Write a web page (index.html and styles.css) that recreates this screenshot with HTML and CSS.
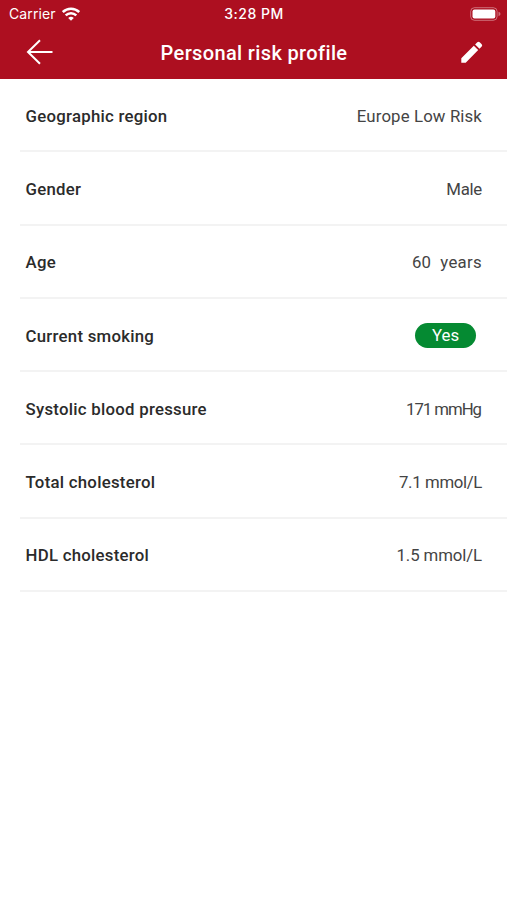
FILE: index.html
```html
<!DOCTYPE html>
<html lang="en">
<head>
<meta charset="utf-8">
<meta name="viewport" content="width=device-width, initial-scale=1">
<title>Personal risk profile</title>
<link rel="stylesheet" href="styles.css">
</head>
<body>
<header class="header">
  <div class="status">
    <div class="carrier"><span>Carrier</span>
      <svg class="wifi" viewBox="0 0 18 14" width="18" height="14" fill="none" stroke="#fff" stroke-width="2.5"><path d="M.8 5a11.8 11.8 0 0 1 16.4 0M3.7 8.3a7.6 7.6 0 0 1 10.6 0"/><path d="M9 13.8 6.2 11a4 4 0 0 1 5.6 0Z" fill="#fff" stroke="none"/></svg>
    </div>
    <span class="time">3:28 PM</span>
    <svg class="battery" viewBox="0 0 31 14" width="31" height="14"><rect x=".7" y=".7" width="26.4" height="12.6" rx="3.8" fill="none" stroke="#fff" stroke-opacity=".4"/><rect x="2.5" y="2.5" width="22.8" height="9" rx="2" fill="#fff"/><path d="M28.5 4.8q2 .6 2 2.2t-2 2.2Z" fill="#fff" fill-opacity=".4"/></svg>
  </div>
  <nav class="nav">
    <svg class="back" viewBox="0 0 28 26" width="28" height="26" fill="none" stroke="#fff" stroke-width="2"><path d="M26.5 13H2M14 1.2 2 13l12 11.8"/></svg>
    <h1 class="title">Personal risk profile</h1>
    <svg class="edit" viewBox="0 0 22 22" width="22" height="22" fill="#fff"><path d="M.3 17.2 12.8 4.7l4.4 4.4L4.7 21.7H.3ZM14.1 3.4l2.2-2.2q1.2-1 2.4 0l2 2.1q1 1.1 0 2.3l-2.2 2.2Z"/></svg>
  </nav>
</header>
<main class="list">
  <div class="row"><span class="label">Geographic region</span><span class="value region">Europe Low Risk</span></div>
  <div class="row"><span class="label">Gender</span><span class="value gender">Male</span></div>
  <div class="row"><span class="label">Age</span><span class="value age">60&nbsp; years</span></div>
  <div class="row"><span class="label">Current smoking</span><span class="pill">Yes</span></div>
  <div class="row"><span class="label">Systolic blood pressure</span><span class="value pressure">171 mmHg</span></div>
  <div class="row"><span class="label">Total cholesterol</span><span class="value total">7.1 mmol/L</span></div>
  <div class="row"><span class="label">HDL cholesterol</span><span class="value">1.5 mmol/L</span></div>
</main>
</body>
</html>
```
FILE: styles.css
```css
* { box-sizing: border-box; }
body { margin: 0; min-height: 900px; background: #fff; font-family: Roboto, sans-serif; color: #2b2b2b; }
.header { height: 79px; background: #ad0f20; color: #fff; }
.status { height: 27px; padding: 0 6px 0 9px; display: grid; grid-template-columns: 1fr auto 1fr; align-items: center; font-family: Inter, sans-serif; font-size: 14px; }
.carrier { display: flex; align-items: center; gap: 6px; letter-spacing: .1px; }
.time { margin-right: 2px; font-size: 14px; font-weight: 500; letter-spacing: .5px; }
.battery { justify-self: end; }
.nav { height: 52px; padding: 0 24px 2px 26px; display: grid; grid-template-columns: 1fr auto 1fr; align-items: center; }
.title { margin: 0; padding: 2px 1px 0 0; font-size: 20px; line-height: 26px; font-weight: 500; letter-spacing: .36px; }
.edit { justify-self: end; }
.list { padding-left: 20px; }
.row { height: 73.3px; padding: 2px 25px 0 5.5px; border-bottom: 2.5px solid #f3f3f3; display: flex; align-items: center; justify-content: space-between; font-size: 16.8px; line-height: 24px; }
.label { font-weight: 500; letter-spacing: .26px; }
.value { color: #444; letter-spacing: -.1px; }
.region { letter-spacing: .13px; }
.gender { letter-spacing: -.25px; }
.age { letter-spacing: .3px; }
.pressure { margin-right: 1px; letter-spacing: -1.05px; }
.total { letter-spacing: -.35px; }
.pill { width: 61px; height: 25px; margin-right: 6px; border-radius: 13px; background: #058a32; color: #fff; text-align: center; line-height: 25px; }
```
